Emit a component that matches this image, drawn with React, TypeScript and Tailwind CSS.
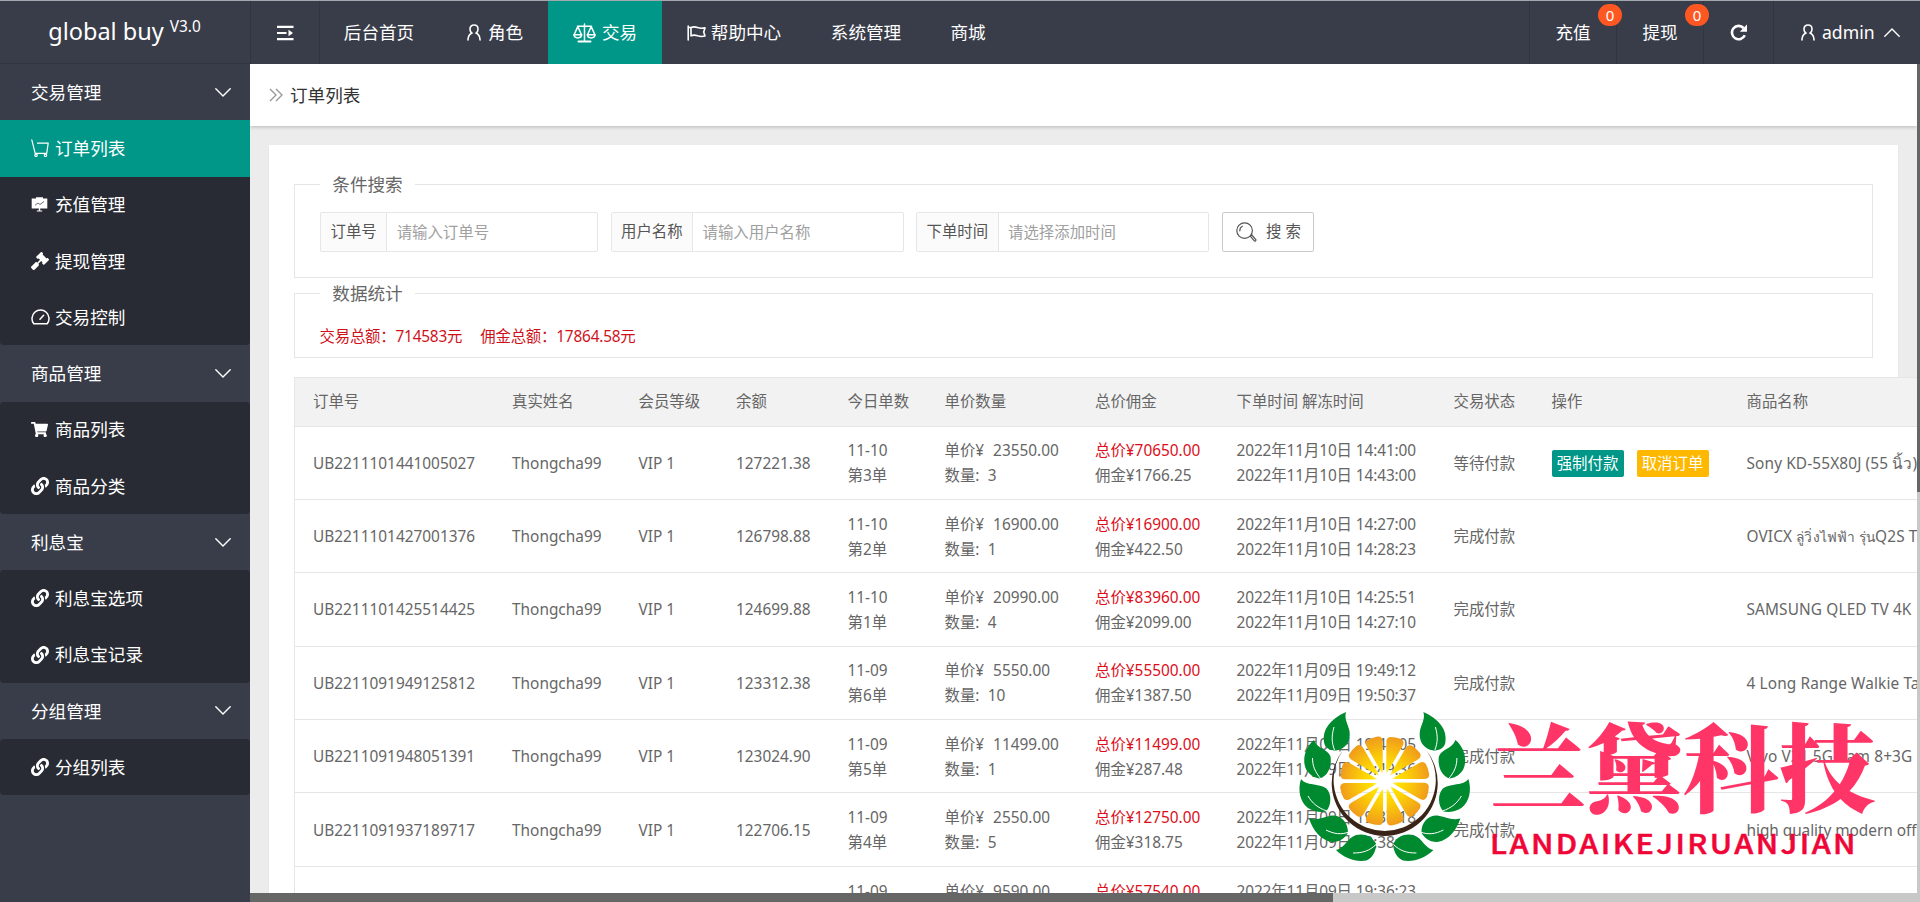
import React from "react";
import { FaGavel, FaLink, FaShoppingCart } from "react-icons/fa";

type IconProps = { className?: string };

const stroke = {
  fill: "none",
  stroke: "currentColor",
  strokeLinecap: "round" as const,
  strokeLinejoin: "round" as const,
};

function UserIcon({ className }: IconProps) {
  return (
    <svg viewBox="0 0 15 18" className={className} {...stroke} strokeWidth={1.7}>
      <path d="M5.2 9.6C3.9 8.600 3.200 7.200 3.200 5.400 3.200 2.700 4.900 1 7.500 1s4.300 1.700 4.300 4.400c0 1.800-.7 3.200-2 4.200" />
      <path d="M5.200 9.600C2.600 10.800 1.200 13.400 1 17M9.800 9.600c2.600 1.200 4 3.800 4.200 7.400" />
    </svg>
  );
}

function ScaleIcon({ className }: IconProps) {
  return (
    <svg viewBox="0 0 23 20" className={className} {...stroke} strokeWidth={1.5}>
      <path d="M11.500 1v16.500M4.500 3.200h14M4.800 3.600 1.200 11.500M4.800 3.600l3.600 7.900M18.200 3.600l-3.600 7.900M18.200 3.600l3.600 7.900" />
      <path d="M.9 11.700h7.800c-.3 2-1.800 3.200-3.900 3.200S1.200 13.700.9 11.700zM14.300 11.700h7.800c-.3 2-1.800 3.200-3.900 3.200s-3.600-1.200-3.900-3.200z" />
      <path d="M5.500 18.600h12" strokeWidth={2} />
    </svg>
  );
}

function FlagIcon({ className }: IconProps) {
  return (
    <svg viewBox="0 0 19 16" className={className} {...stroke} strokeWidth={1.6}>
      <path d="M1.200 1v14M4 2.600c2.200-1.200 4.400-.9 6.600 0 2.200.8 4.600.9 7.400.3l-1.300 4L18 11c-2.800.7-5.200.5-7.400-.2-2.200-.8-4.400-1-6.600.1zM1.200 2.200 4 2.600" />
    </svg>
  );
}

function ToggleIcon({ className }: IconProps) {
  return (
    <svg viewBox="0 0 17 16" className={className} fill="currentColor">
      <path d="M0 .7h16.500v2.200H0zM0 6.900h9.500v2.200H0zM0 13.100h16.500v2.200H0zM11.500 4.800 16 8l-4.500 3.200z" />
    </svg>
  );
}

function RefreshIcon({ className }: IconProps) {
  return (
    <svg viewBox="0 0 18 17" className={className}>
      <path
        d="M14.800 11.300A6.700 6.700 0 1 1 13.600 4"
        fill="none"
        stroke="currentColor"
        strokeWidth="2.600"
      />
      <path d="M17 .6v7.200H9.800z" fill="currentColor" />
    </svg>
  );
}

function CartOutlineIcon({ className }: IconProps) {
  return (
    <svg viewBox="0 0 18 18" className={className} {...stroke} strokeWidth={1.2}>
      <path d="M.8.8 4.200 14.300h11.500L17.200 4.200H6.500" />
      <circle cx="5" cy="16.300" r="1.200" />
      <circle cx="14.500" cy="16.300" r="1.200" />
    </svg>
  );
}

function BoardIcon({ className }: IconProps) {
  return (
    <svg viewBox="0 0 17 15" className={className}>
      <path d="M5 .3h7v1.300h4.300v9.900H9.200v1.900h2v1H5.800v-1h2v-1.900H.7V1.600H5z" fill="currentColor" />
      <path d="M4 8.300 7 6l2 1.500 4-3" fill="none" stroke="#6a6d75" strokeWidth="1" />
    </svg>
  );
}

function GaugeIcon({ className }: IconProps) {
  return (
    <svg viewBox="0 0 19 16" className={className} {...stroke} strokeWidth={1.5}>
      <path d="M2.800 14.800A8.500 8.500 0 1 1 16.200 14.800zM9 10.200l3.600-4" />
    </svg>
  );
}

function Chevron({ className }: IconProps) {
  return (
    <svg viewBox="0 0 16 9" className={className} {...stroke} strokeWidth={1.4}>
      <path d="M.8.8 8 8 15.200.8" />
    </svg>
  );
}

function SearchIcon({ className }: IconProps) {
  return (
    <svg viewBox="0 0 21 20" className={className} {...stroke} strokeWidth={1.2}>
      <circle cx="8.600" cy="8.600" r="7.800" />
      <path d="M3.800 8.800c0-2 .8-3.700 2.500-4.600M14.300 14.200l1.500-1.200 4 4.600c.6.800-.7 2-1.500 1.300z" />
    </svg>
  );
}

type MenuItem = { label: string; icon: React.ReactNode; active?: boolean };
const link = () => <FaLink className="size-[18px]" />;

const menu: { title: string; items: MenuItem[] }[] = [
  {
    title: "交易管理",
    items: [
      { label: "订单列表", icon: <CartOutlineIcon className="size-[18px]" />, active: true },
      { label: "充值管理", icon: <BoardIcon className="h-[15px] w-[17px]" /> },
      { label: "提现管理", icon: <FaGavel className="size-[18px]" /> },
      { label: "交易控制", icon: <GaugeIcon className="h-4 w-[19px]" /> },
    ],
  },
  {
    title: "商品管理",
    items: [
      { label: "商品列表", icon: <FaShoppingCart className="size-[17px]" /> },
      { label: "商品分类", icon: link() },
    ],
  },
  {
    title: "利息宝",
    items: [
      { label: "利息宝选项", icon: link() },
      { label: "利息宝记录", icon: link() },
    ],
  },
  { title: "分组管理", items: [{ label: "分组列表", icon: link() }] },
];

function Sidebar() {
  return (
    <aside className="flex w-[250px] shrink-0 flex-col bg-[#393d49] text-[17.6px] text-white">
      <div className="flex h-[63px] shrink-0 items-center justify-center border-b border-[#32353f] pr-px text-[23.500px]">
        <span className="whitespace-nowrap">global buy</span>
        <span className="mb-2.5 ml-1.5 text-[15.4px]">V3.0</span>
      </div>
      <nav>
        {menu.map((group) => (
          <div key={group.title}>
            <div className="flex h-[56.25px] items-center justify-between pr-[19px] pl-[31px]">
              {group.title}
              <Chevron className="h-[9px] w-4" />
            </div>
            <div className="rounded-sm bg-[#282b33]">
              {group.items.map((item) => (
                <div
                  key={item.label}
                  className={`flex h-[56.25px] items-center pl-[31px] ${item.active ? "bg-[#009688]" : ""}`}
                >
                  <span className="flex w-6 shrink-0 items-center">{item.icon}</span>
                  {item.label}
                </div>
              ))}
            </div>
          </div>
        ))}
      </nav>
    </aside>
  );
}

function Badge() {
  return (
    <span className="absolute top-[3px] right-[-6px] z-10 flex h-[22px] w-6 items-center justify-center rounded-full bg-[#ff5722] text-[15px]">
      0
    </span>
  );
}

function Header() {
  return (
    <header className="flex h-[63px] shrink-0 bg-[#393d49] text-[17.6px] whitespace-nowrap text-white">
      <div className="flex w-[70px] items-center justify-center border-x border-[#32353f]">
        <ToggleIcon className="h-4 w-[17px]" />
      </div>
      <div className="flex w-[120px] items-center justify-center pr-0.5">后台首页</div>
      <div className="flex w-[108px] items-center justify-center gap-[7px] pl-0.5">
        <UserIcon className="h-[17px] w-3.5" />
        角色
      </div>
      <div className="flex w-[114px] items-center justify-center gap-1.5 bg-[#009688]">
        <ScaleIcon className="h-5 w-[23px]" />
        交易
      </div>
      <div className="flex w-36 items-center justify-center gap-[5px]">
        <FlagIcon className="h-4 w-[19px]" />
        帮助中心
      </div>
      <div className="flex w-[120px] items-center justify-center">系统管理</div>
      <div className="flex w-[86px] items-center justify-center pr-0.5">商城</div>
      <div className="ml-auto flex">
        <div className="relative flex w-[87px] items-center justify-center border-l border-[#32353f]">
          充值
          <Badge />
        </div>
        <div className="relative flex w-[87px] items-center justify-center border-l border-[#32353f]">
          提现
          <Badge />
        </div>
        <div className="flex w-[70px] items-center justify-center border-l border-[#32353f]">
          <RefreshIcon className="h-[17px] w-[18px]" />
        </div>
        <div className="flex w-[147px] items-center border-l border-[#32353f] pl-[27px]">
          <UserIcon className="mr-[7px] h-[17px] w-3.5" />
          admin
          <Chevron className="ml-[9px] h-[9px] w-4 rotate-180" />
        </div>
      </div>
    </header>
  );
}

function Field({ label, hint, width }: { label: string; hint: string; width: string }) {
  return (
    <div className={`flex h-10 rounded-[2px] border border-[#e6e6e6] ${width}`}>
      <div className="flex items-center border-r border-[#e6e6e6] bg-[#fbfbfb] px-[9.500px] text-[#555]">
        {label}
      </div>
      <div className="flex items-center pt-0.5 pl-[9.500px] text-[#a0a0a0]">{hint}</div>
    </div>
  );
}

function Legend({ children }: { children: React.ReactNode }) {
  return (
    <div className="-mt-[13px] ml-[25px] flex h-6 w-[95px] items-center justify-center bg-white text-[17.6px] text-[#666]">
      {children}
    </div>
  );
}

type Order = {
  id: string;
  balance: string;
  day: string;
  nth: string;
  price: string;
  qty: string;
  total: string;
  fee: string;
  created: string;
  released: string;
  product: React.ReactNode;
  pending?: boolean;
};

const orders: Order[] = [
  { id: "UB2211101441005027", balance: "127221.38", day: "11-10", nth: "第3单", price: "23550.00", qty: "3", total: "70650.00", fee: "1766.25", created: "2022年11月10日 14:41:00", released: "2022年11月10日 14:43:00", product: "Sony KD-55X80J (55 นิ้ว)", pending: true },
  { id: "UB2211101427001376", balance: "126798.88", day: "11-10", nth: "第2单", price: "16900.00", qty: "1", total: "16900.00", fee: "422.50", created: "2022年11月10日 14:27:00", released: "2022年11月10日 14:28:23", product: <>OVICX <span className="text-[13.800px]">ลู่วิ่งไฟฟ้า รุ่น</span>Q2S T</> },
  { id: "UB2211101425514425", balance: "124699.88", day: "11-10", nth: "第1单", price: "20990.00", qty: "4", total: "83960.00", fee: "2099.00", created: "2022年11月10日 14:25:51", released: "2022年11月10日 14:27:10", product: "SAMSUNG QLED TV 4K" },
  { id: "UB2211091949125812", balance: "123312.38", day: "11-09", nth: "第6单", price: "5550.00", qty: "10", total: "55500.00", fee: "1387.50", created: "2022年11月09日 19:49:12", released: "2022年11月09日 19:50:37", product: "4 Long Range Walkie Ta" },
  { id: "UB2211091948051391", balance: "123024.90", day: "11-09", nth: "第5单", price: "11499.00", qty: "1", total: "11499.00", fee: "287.48", created: "2022年11月09日 19:48:05", released: "2022年11月09日 19:49:36", product: "Vivo V21 5G Ram 8+3G" },
  { id: "UB2211091937189717", balance: "122706.15", day: "11-09", nth: "第4单", price: "2550.00", qty: "5", total: "12750.00", fee: "318.75", created: "2022年11月09日 19:37:18", released: "2022年11月09日 19:38:42", product: <span className="tracking-[-0.050px]">high quality modern off</span> },
  { id: "", balance: "", day: "11-09", nth: "", price: "9590.00", qty: "", total: "57540.00", fee: "", created: "2022年11月09日 19:36:23", released: "", product: "" },
];

const columns = [
  "订单号", "真实姓名", "会员等级", "余额", "今日单数", "单价数量",
  "总价佣金", "下单时间 解冻时间", "交易状态", "操作", "商品名称",
];

const grid =
  "grid grid-cols-[199px_126.500px_97.500px_111.500px_97px_150.500px_141.500px_217px_98px_195px_200px] items-center pl-[18px] whitespace-nowrap";

function Row({ order }: { order: Order }) {
  const full = order.id !== "";
  return (
    <div className={`${grid} h-[73.400px] border-b border-[#e6e6e6] pt-px leading-[25px]`}>
      <div>{order.id}</div>
      <div>{full && "Thongcha99"}</div>
      <div>{full && "VIP 1"}</div>
      <div>{order.balance}</div>
      <div className="h-[50px]">
        {order.day}
        <br />
        {order.nth}
      </div>
      <div className="h-[50px]">
        单价¥<span className="inline-block w-[9px]" />
        {order.price}
        <br />
        {full && (
          <>
            数量<span className="inline-block w-[12.500px]">:</span>
            {order.qty}
          </>
        )}
      </div>
      <div className="h-[50px]">
        <span className="text-[#dc0f1b]">总价¥{order.total}</span>
        <br />
        {full && `佣金¥${order.fee}`}
      </div>
      <div className="h-[50px] tracking-[-0.110px]">
        {order.created}
        <br />
        {order.released}
      </div>
      <div>{full && (order.pending ? "等待付款" : "完成付款")}</div>
      <div className="flex gap-[13px]">
        {order.pending && (
          <>
            <span className="flex h-[27px] w-[72px] items-center justify-center rounded-[2px] bg-[#009688] text-white">
              强制付款
            </span>
            <span className="flex h-[27px] w-[72px] items-center justify-center rounded-[2px] bg-[#ffb800] text-white">
              取消订单
            </span>
          </>
        )}
      </div>
      <div className="tracking-[0.120px]">{order.product}</div>
    </div>
  );
}

const leaves = [
  { body: "M56 12C40 19 32 30 34 42c.5 6 6 8.500 12 8.500C56 49 61 41 59.500 31 58 24 54 19 56 12z", vein: "M44.500 50C41.500 42 41.500 36 44 27" },
  { body: "M24 40C14 48 12 62 16.500 70c4 6 9 8 13.500 8.500 8-3 12-12 10.500-22C38 49 27 49 24 40z", vein: "M31 79C25 72 22.500 66 22.500 58" },
  { body: "M11 79C7.500 90 10 102 18 108c6 4 13 4.500 18 3.500 5.500-6 6-17 .5-23C29 83 16 86 11 79z", vein: "M37 111C28 108 22 103 18 96" },
  { body: "M19 118.500C23 130 30 140 42 142c8 .3 14-5 16-9.500C58 122 51 115 42 115.500c-8 1-14 5.500-23 3z", vein: "M59 132C51 135 44 134 36 130" },
  { body: "M46 150c8 8 20 12.500 30.500 10.500C84 157 86.500 149 86 143.500 82 136 74 133 66 135c-9 3-11 13-20 15z", vein: "M86 144.500C79 151 73 153 63 153" },
];

function Leaves() {
  return (
    <>
      {leaves.map((leaf) => (
        <g key={leaf.body}>
          <path d={leaf.body} fill="#008a30" />
          <path d={leaf.vein} fill="none" stroke="#fff" strokeWidth="1" />
        </g>
      ))}
    </>
  );
}

const slices = [0, 30, 60, 90, 120, 150, 180, 210, 240, 270, 300, 330];

function Watermark() {
  return (
    <svg
      viewBox="0 0 610 170"
      className="pointer-events-none absolute top-[699px] left-[1290px] z-20 h-[170px] w-[610px]"
    >
      <defs>
        <radialGradient id="pulp" gradientUnits="userSpaceOnUse" cx="0" cy="0" r="45">
          <stop offset="0.120" stopColor="#fffbe0" />
          <stop offset="0.280" stopColor="#ffe300" />
          <stop offset="0.500" stopColor="#fdd006" />
          <stop offset="1" stopColor="#f09a1c" />
        </radialGradient>
      </defs>
      <Leaves />
      <g transform="translate(189.400 0) scale(-1 1)">
        <Leaves />
      </g>
      <path d="M53.200 50A53 53 0 1 0 136.200 50A51.100 51.100 0 1 1 53.200 50z" fill="#3a2418" />
      <g transform="translate(94.700 81)">
        <circle r="11" fill="#fff" />
        {slices.map((angle) => (
          <path
            key={angle}
            transform={`rotate(${angle})`}
            d="M8 -2 L39 -2 Q44.800 -2 44.500 -7 Q43.500 -13 41 -17.200 Q38.500 -20.500 34.500 -18 L8 -2.800 z"
            fill="url(#pulp)"
          />
        ))}
      </g>
      <text
        x="200"
        y="104"
        textLength="385"
        fill="#ff3567"
        className="font-['Noto_Serif_CJK_SC','Noto_Sans_CJK_SC',serif] text-[96px] font-black"
      >
        兰黛科技
      </text>
      <text
        x="200"
        y="154"
        textLength="368"
        lengthAdjust="spacingAndGlyphs"
        fill="#f00537"
        stroke="#f00537"
        strokeWidth="0.500"
        className="font-['Noto_Sans_CJK_SC',sans-serif] text-[27.500px] font-medium tracking-[2.200px]"
      >
        LANDAIKEJIRUANJIAN
      </text>
    </svg>
  );
}

export default function App() {
  return (
    <div className="relative flex h-[902px] w-[1920px] overflow-hidden border-t border-[#a3a7ae] bg-[#ececec] font-['Noto_Sans','Noto_Sans_CJK_SC',sans-serif] text-[15.400px] text-[#666]">
      <Sidebar />
      <div className="flex min-w-0 flex-1 flex-col">
        <Header />
        <div className="flex min-h-0 flex-1">
          <main className="flex min-w-0 flex-1 flex-col overflow-hidden">
            <div className="z-10 flex h-[62px] shrink-0 items-center bg-white pl-[19px] text-[17.6px] text-[#333] shadow-[0_1px_4px_rgba(0,0,0,0.220)]">
              <svg viewBox="0 0 14 14" className="mr-[7px] size-3.5" fill="none" stroke="#999" strokeWidth="1.400">
                <path d="M1 1l6 6-6 6M7 1l6 6-6 6" />
              </svg>
              订单列表
            </div>
            <div className="mt-[19px] mr-[19px] ml-[19px] min-h-0 flex-1 bg-white px-[25px] pt-[39px] shadow-[0_1px_2px_rgba(0,0,0,0.050)]">
              <section className="h-[94px] w-[1579px] border border-[#e6e6e6]">
                <Legend>条件搜索</Legend>
                <div className="mt-4 ml-[25px] flex gap-[12.500px]">
                  <Field label="订单号" hint="请输入订单号" width="w-[278px]" />
                  <Field label="用户名称" hint="请输入用户名称" width="w-[293px]" />
                  <Field label="下单时间" hint="请选择添加时间" width="w-[293px]" />
                  <div className="flex h-10 w-[92px] items-center justify-center gap-[9px] rounded-[2px] border border-[#c9c9c9] pl-0.5 text-[#555]">
                    <SearchIcon className="h-5 w-[21px]" />
                    搜 索
                  </div>
                </div>
              </section>
              <section className="mt-[15px] h-[65px] w-[1579px] border border-[#e6e6e6]">
                <Legend>数据统计</Legend>
                <div className="mt-5 ml-[24.500px] flex gap-[18px] tracking-[-0.200px] text-[#cf111a]">
                  <span>交易总额：714583元</span>
                  <span>佣金总额：17864.58元</span>
                </div>
              </section>
              <section className="mt-[19px] w-[1700px] border border-[#e6e6e6] bg-white">
                <div className={`${grid} h-[48.500px] border-b border-[#e6e6e6] bg-[#f2f2f2]`}>
                  {columns.map((name) => (
                    <div key={name}>{name}</div>
                  ))}
                </div>
                {orders.map((order) => (
                  <Row key={order.created} order={order} />
                ))}
              </section>
            </div>
          </main>
          <div className="w-[3px] shrink-0 bg-[#c8c8c8]">
            <div className="h-[428px] bg-[#666]" />
          </div>
        </div>
        <div className="h-[9px] shrink-0 bg-[#c8c8c8]">
          <div className="h-full w-[1083px] bg-[#666]" />
        </div>
      </div>
      <Watermark />
    </div>
  );
}
